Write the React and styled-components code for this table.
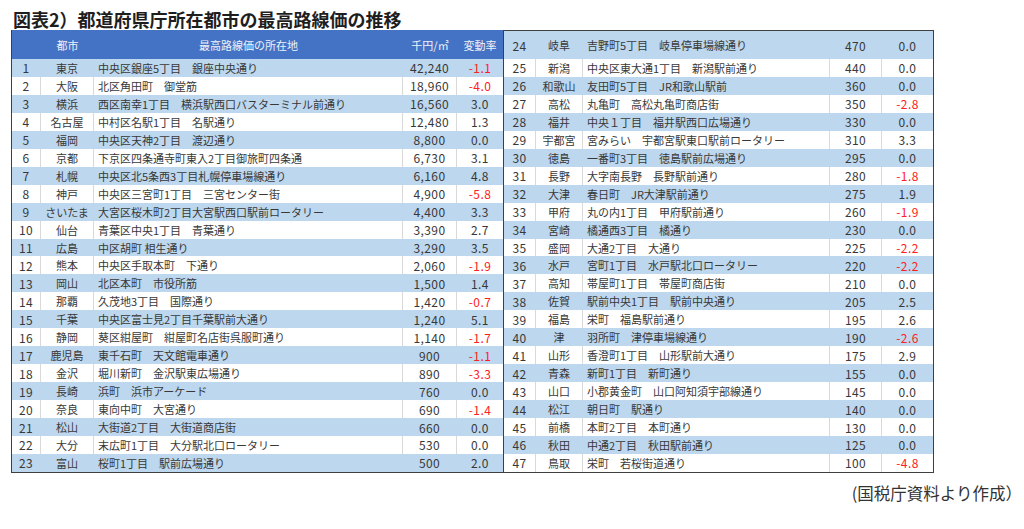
import React from 'react';
import styled, { createGlobalStyle } from 'styled-components';

const GlobalStyle = createGlobalStyle`
  body {
    margin: 0;
    background: #fff;
    font-family: 'Noto Sans CJK JP', 'Noto Sans', sans-serif;
    color: #333;
  }
`;

const LEFT = [
  [1, '東京', '中央区銀座5丁目　銀座中央通り', '42,240', '-1.1'],
  [2, '大阪', '北区角田町　御堂筋', '18,960', '-4.0'],
  [3, '横浜', '西区南幸1丁目　横浜駅西口バスターミナル前通り', '16,560', '3.0'],
  [4, '名古屋', '中村区名駅1丁目　名駅通り', '12,480', '1.3'],
  [5, '福岡', '中央区天神2丁目　渡辺通り', '8,800', '0.0'],
  [6, '京都', '下京区四条通寺町東入2丁目御旅町四条通', '6,730', '3.1'],
  [7, '札幌', '中央区北5条西3丁目札幌停車場線通り', '6,160', '4.8'],
  [8, '神戸', '中央区三宮町1丁目　三宮センター街', '4,900', '-5.8'],
  [9, 'さいたま', '大宮区桜木町2丁目大宮駅西口駅前ロータリー', '4,400', '3.3'],
  [10, '仙台', '青葉区中央1丁目　青葉通り', '3,390', '2.7'],
  [11, '広島', '中区胡町 相生通り', '3,290', '3.5'],
  [12, '熊本', '中央区手取本町　下通り', '2,060', '-1.9'],
  [13, '岡山', '北区本町　市役所筋', '1,500', '1.4'],
  [14, '那覇', '久茂地3丁目　国際通り', '1,420', '-0.7'],
  [15, '千葉', '中央区富士見2丁目千葉駅前大通り', '1,240', '5.1'],
  [16, '静岡', '葵区紺屋町　紺屋町名店街呉服町通り', '1,140', '-1.7'],
  [17, '鹿児島', '東千石町　天文館電車通り', '900', '-1.1'],
  [18, '金沢', '堀川新町　金沢駅東広場通り', '890', '-3.3'],
  [19, '長崎', '浜町　浜市アーケード', '760', '0.0'],
  [20, '奈良', '東向中町　大宮通り', '690', '-1.4'],
  [21, '松山', '大街道2丁目　大街道商店街', '660', '0.0'],
  [22, '大分', '末広町1丁目　大分駅北口ロータリー', '530', '0.0'],
  [23, '富山', '桜町1丁目　駅前広場通り', '500', '2.0'],
];

const RIGHT = [
  [24, '岐阜', '吉野町5丁目　岐阜停車場線通り', '470', '0.0'],
  [25, '新潟', '中央区東大通1丁目　新潟駅前通り', '440', '0.0'],
  [26, '和歌山', '友田町5丁目　JR和歌山駅前', '360', '0.0'],
  [27, '高松', '丸亀町　高松丸亀町商店街', '350', '-2.8'],
  [28, '福井', '中央１丁目　福井駅西口広場通り', '330', '0.0'],
  [29, '宇都宮', '宮みらい　宇都宮駅東口駅前ロータリー', '310', '3.3'],
  [30, '徳島', '一番町3丁目　徳島駅前広場通り', '295', '0.0'],
  [31, '長野', '大字南長野　長野駅前通り', '280', '-1.8'],
  [32, '大津', '春日町　JR大津駅前通り', '275', '1.9'],
  [33, '甲府', '丸の内1丁目　甲府駅前通り', '260', '-1.9'],
  [34, '宮崎', '橘通西3丁目　橘通り', '230', '0.0'],
  [35, '盛岡', '大通2丁目　大通り', '225', '-2.2'],
  [36, '水戸', '宮町1丁目　水戸駅北口ロータリー', '220', '-2.2'],
  [37, '高知', '帯屋町1丁目　帯屋町商店街', '210', '0.0'],
  [38, '佐賀', '駅前中央1丁目　駅前中央通り', '205', '2.5'],
  [39, '福島', '栄町　福島駅前通り', '195', '2.6'],
  [40, '津', '羽所町　津停車場線通り', '190', '-2.6'],
  [41, '山形', '香澄町1丁目　山形駅前大通り', '175', '2.9'],
  [42, '青森', '新町1丁目　新町通り', '155', '0.0'],
  [43, '山口', '小郡黄金町　山口阿知須宇部線通り', '145', '0.0'],
  [44, '松江', '朝日町　駅通り', '140', '0.0'],
  [45, '前橋', '本町2丁目　本町通り', '130', '0.0'],
  [46, '秋田', '中通2丁目　秋田駅前通り', '125', '0.0'],
  [47, '鳥取', '栄町　若桜街道通り', '100', '-4.8'],
];

const LEFT_COLS = '29px 53px 309px 54px 46px';
const RIGHT_COLS = '32px 47px 247px 52px 51px';

const Page = styled.div`
  width: 1024px;
  height: 529px;
  box-sizing: border-box;
  padding: 9px 0 0 0;
  display: flex;
  flex-direction: column;
`;

const Title = styled.h1`
  margin: 0 0 0 13px;
  height: 21px;
  font-size: 18px;
  line-height: 21px;
  font-weight: 700;
  color: #1e1e1e;
`;

const Tables = styled.div`
  display: flex;
  padding-left: 11px;
  height: 443px;
`;

const Table = styled.div`
  display: flex;
  flex-direction: column;
  box-sizing: border-box;
  height: 100%;
  border: 1px solid #3f3f3f;
  border-left-width: ${(p) => (p.$first ? '1px' : '0')};
  border-top-width: ${(p) => (p.$first ? '0' : '1px')};
`;

const HeaderRow = styled.div`
  display: grid;
  grid-template-columns: ${(p) => p.$cols};
  height: 29px;
  flex: none;
  background: #4472c4;
  color: #eef2fa;
  font-size: 11px;
  align-items: center;
  text-align: center;
`;

const Row = styled.div`
  display: grid;
  grid-template-columns: ${(p) => p.$cols};
  flex: ${(p) => (p.$tall ? 'none' : '1 1 0')};
  height: ${(p) => (p.$tall ? '28px' : 'auto')};
  min-height: 0;
  background: ${(p) => (p.$shade ? '#bdd7ee' : '#fff')};
`;

const Cell = styled.div`
  box-sizing: border-box;
  display: flex;
  align-items: center;
  justify-content: ${(p) => (p.$left ? 'flex-start' : 'center')};
  padding-left: ${(p) => (p.$left ? '4px' : '0')};
  border-right: ${(p) => (p.$last ? '0' : '1px solid')};
  border-right-color: ${(p) => (p.$shade ? '#bdd7ee' : '#d9d9d9')};
  font-size: ${(p) => (p.$num ? '12px' : '11px')};
  letter-spacing: ${(p) => (p.$num ? '0.4px' : '0')};
  color: ${(p) => (p.$neg ? '#ff2020' : '#383838')};
  white-space: nowrap;
  overflow: hidden;
`;

const Note = styled.div`
  margin-top: 10px;
  padding-right: 2px;
  text-align: right;
  font-size: 16.5px;
  line-height: 20px;
  color: #333;
`;

function DataRow({ row, cols, shade, tall }) {
  const [no, city, place, price, rate] = row;
  return (
    <Row $cols={cols} $shade={shade} $tall={tall}>
      <Cell $num $shade={shade}>{no}</Cell>
      <Cell $shade={shade}>{city}</Cell>
      <Cell $left $shade={shade}>{place}</Cell>
      <Cell $num $shade={shade}>{price}</Cell>
      <Cell $num $last $shade={shade} $neg={rate.startsWith('-')}>
        {rate}
      </Cell>
    </Row>
  );
}

export default function App() {
  return (
    <Page>
      <GlobalStyle />
      <Title>図表2）都道府県庁所在都市の最高路線価の推移</Title>
      <Tables>
        <Table $first>
          <HeaderRow $cols={LEFT_COLS}>
            <span />
            <span>都市</span>
            <span>最高路線価の所在地</span>
            <span>千円/㎡</span>
            <span>変動率</span>
          </HeaderRow>
          {LEFT.map((r, i) => (
            <DataRow key={r[0]} row={r} cols={LEFT_COLS} shade={i % 2 === 0} />
          ))}
        </Table>
        <Table>
          {RIGHT.map((r, i) => (
            <DataRow key={r[0]} row={r} cols={RIGHT_COLS} shade={i % 2 === 0} tall={i === 0} />
          ))}
        </Table>
      </Tables>
      <Note>(国税庁資料より作成）</Note>
    </Page>
  );
}
